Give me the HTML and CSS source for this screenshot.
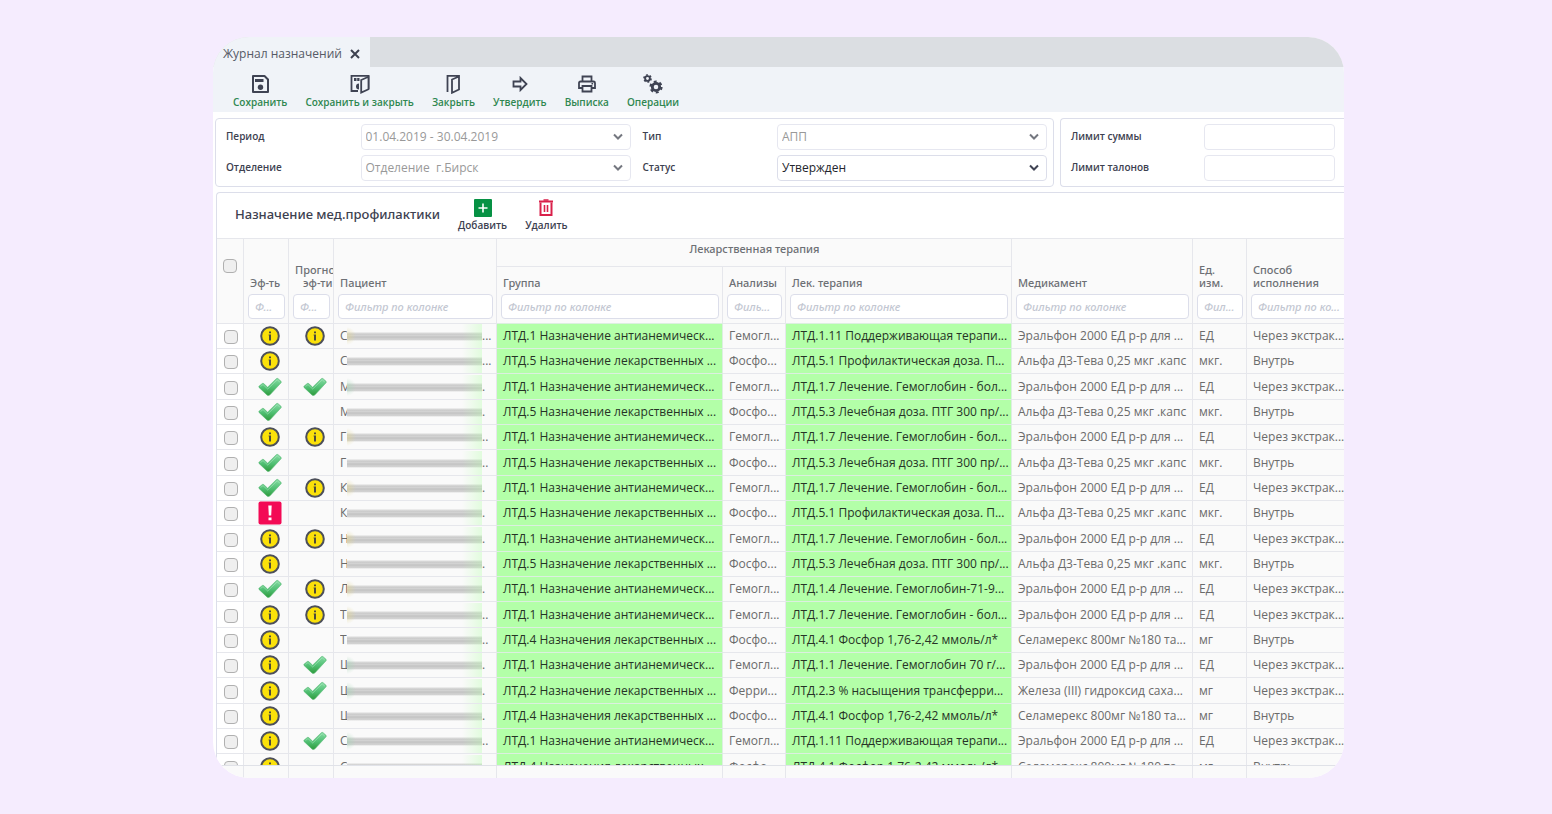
FILE: index.html
```html
<!DOCTYPE html>
<html lang="ru">
<head>
<meta charset="utf-8">
<title>Журнал назначений</title>
<link rel="stylesheet" href="styles.css">
</head>
<body>
<svg class="sprite" aria-hidden="true">
  <defs>
    <linearGradient id="tick-fill" x1="0" y1="0" x2="0" y2="1">
      <stop offset="0" stop-color="#86dba4"/>
      <stop offset="0.55" stop-color="#4fbf72"/>
      <stop offset="1" stop-color="#2f9a3c"/>
    </linearGradient>
    <symbol id="info" viewBox="0 0 20 20">
      <circle cx="10" cy="10" r="8.8" fill="#fbe10a" stroke="#4c4f5a" stroke-width="2"/>
      <path d="M9 5.400h2v1.900H9zM9 8.400h2v6.200H9z" fill="#4c4a3c"/>
      <path d="M8.300 8.400h.7v1h-.7z" fill="#4c4a3c" opacity=".5"/>
    </symbol>
    <symbol id="tick" viewBox="0 0 24 20">
      <path d="M1 9.200L4.300 6.500Q5 6 5.700 6.600L9.600 10.200L18.300 1.700Q19.200 1 20.100 1.700L23 4.300Q23.700 5 23 5.800L12 17.800Q10.400 19.200 8.900 17.900L1 10.400Q.5 9.800 1 9.200Z" fill="url(#tick-fill)" stroke="#55b873" stroke-width=".6"/>
      <path d="M2.500 9.500L5 7.600L9.700 12L19.200 2.900L21.800 5" fill="none" stroke="#b5ecc6" stroke-width="1" opacity=".5"/>
    </symbol>
    <symbol id="alert" viewBox="0 0 24 24">
      <rect x=".5" y=".5" width="23" height="23" rx="2" fill="#f30a55"/>
      <path d="M10.300 4.500h3.400l-.5 10h-2.400zM10.500 16.500h3v2.800h-3z" fill="#fff"/>
    </symbol>
    <symbol id="chevron" viewBox="0 0 10 8">
      <path d="M1 1.500L5 5.500L9 1.500" fill="none" stroke="currentColor" stroke-width="2"/>
    </symbol>
  </defs>
</svg>

<main class="window">
  <div class="tabs">
    <div class="tab">
      <span>Журнал назначений</span>
      <button class="tab-close" type="button" aria-label="Закрыть вкладку">
        <svg width="10" height="10" viewBox="0 0 10 10"><path d="M1 1L9 9M9 1L1 9" fill="none" stroke="#3d4150" stroke-width="2"/></svg>
      </button>
    </div>
  </div>

  <div class="toolbar">
    <button class="tool" type="button">
      <svg width="20" height="20" viewBox="0 0 20 20"><path d="M3 2h11.500L18 5.500V18H3z" fill="none" stroke="currentColor" stroke-width="2" stroke-linejoin="round"/><path d="M5 5h8.500v3H5z" fill="currentColor"/><circle cx="10.500" cy="13.200" r="2.700" fill="currentColor"/></svg>
      <span>Сохранить</span>
    </button>
    <button class="tool" type="button">
      <svg width="20" height="20" viewBox="0 0 20 20"><path d="M12 1.800H1.500V17H8M9 1.800H18.500V15" fill="none" stroke="currentColor" stroke-width="1.800"/><path d="M4 4h2.500v3H4zM7.200 4h2.300v3H7.200zM9 9.500v6a3 3 0 0 1 0-6z" fill="currentColor"/><path d="M11.200 6L18.500 2.800V15.200L11.200 18.500z" fill="#f0f3f8" stroke="currentColor" stroke-width="1.800"/></svg>
      <span>Сохранить и закрыть</span>
    </button>
    <button class="tool" type="button">
      <svg width="20" height="20" viewBox="0 0 20 20"><path d="M4.500 18V1.800H16V15.500L9 18.800V5.500L16 2.500" fill="none" stroke="currentColor" stroke-width="1.800"/></svg>
      <span>Закрыть</span>
    </button>
    <button class="tool" type="button">
      <svg width="20" height="20" viewBox="0 0 20 20"><path d="M3.500 7.500H10.500V4L16.500 10L10.500 16V12.500H3.500z" fill="none" stroke="currentColor" stroke-width="1.800"/></svg>
      <span>Утвердить</span>
    </button>
    <button class="tool" type="button">
      <svg width="20" height="20" viewBox="0 0 20 20"><path d="M5.500 7V2.500H14.500V7M5.500 14H2V9Q2 7.500 3.500 7.500H16.500Q18 7.500 18 9V14H14.500M5.500 12H14.500V17.500H5.500z" fill="none" stroke="currentColor" stroke-width="1.800"/><path d="M14.500 9h1.600v1.500h-1.600z" fill="currentColor"/></svg>
      <span>Выписка</span>
    </button>
    <button class="tool" type="button">
      <svg width="20" height="20" viewBox="0 0 20 20" fill="none" stroke="currentColor"><circle cx="4.500" cy="4.500" r="2.400" stroke-width="1.900"/><circle cx="4.500" cy="4.500" r="3.500" stroke-width="1.700" stroke-dasharray="1.830 1.830"/><circle cx="13" cy="13" r="3.700" stroke-width="2.800"/><circle cx="13" cy="13" r="5.500" stroke-width="2.200" stroke-dasharray="2.880 2.880"/></svg>
      <span>Операции</span>
    </button>
  </div>

  <form class="filters">
    <div class="panel panel-main">
      <div class="field">
        <label for="period">Период</label>
        <div class="select"><select id="period" disabled><option>01.04.2019 - 30.04.2019</option></select><svg><use href="#chevron"/></svg></div>
      </div>
      <div class="field">
        <label for="kind">Тип</label>
        <div class="select"><select id="kind" disabled><option>АПП</option></select><svg><use href="#chevron"/></svg></div>
      </div>
      <div class="field">
        <label for="unit">Отделение</label>
        <div class="select"><select id="unit" disabled><option>Отделение &nbsp;г.Бирск</option></select><svg><use href="#chevron"/></svg></div>
      </div>
      <div class="field">
        <label for="status">Статус</label>
        <div class="select"><select id="status"><option>Утвержден</option></select><svg><use href="#chevron"/></svg></div>
      </div>
    </div>
    <div class="panel panel-limits">
      <div class="field"><label for="sum">Лимит суммы</label><input id="sum" type="text"></div>
      <div class="field"><label for="tickets">Лимит талонов</label><input id="tickets" type="text"></div>
    </div>
  </form>

  <section class="journal">
    <div class="journal-head">
      <h1>Назначение мед.профилактики</h1>
      <button class="action" type="button">
        <svg width="20" height="20" viewBox="0 0 20 20"><rect x="1" y="1" width="18" height="18" rx="1" fill="#069144"/><path d="M10 5.500v9M5.500 10h9" stroke="#fff" stroke-width="1.600"/></svg>
        <span>Добавить</span>
      </button>
      <button class="action" type="button">
        <svg width="20" height="20" viewBox="0 0 20 20" fill="none" stroke="#d9204a"><path d="M3 3.500H17" stroke-width="2"/><path d="M7.500 2H12.500" stroke-width="1.600"/><path d="M4.500 4.500V17H15.500V4.500" stroke-width="2"/><path d="M8.500 7V14M11.500 7V14" stroke-width="1.600"/></svg>
        <span>Удалить</span>
      </button>
    </div>

    <div class="viewport">
      <table class="grid">
        <colgroup><col class="c-check"><col class="c-mark"><col class="c-mark"><col class="c-patient"><col><col class="c-tests"><col><col class="c-drug"><col class="c-unit"><col class="c-way"></colgroup>
        <thead>
          <tr class="head-top">
            <th rowspan="2" class="check-head"><input type="checkbox" aria-label="Выбрать все"></th>
            <th rowspan="2"><span>Эф-ть</span><input type="text" placeholder="Ф..." aria-label="Фильтр: Эф-ть"></th>
            <th rowspan="2"><span class="wide">Прогноз<br>эф-ти</span><input type="text" placeholder="Ф..." aria-label="Фильтр: Прогноз эф-ти"></th>
            <th rowspan="2"><span>Пациент</span><input type="text" placeholder="Фильтр по колонке" aria-label="Фильтр: Пациент"></th>
            <th colspan="3" class="band">Лекарственная терапия</th>
            <th rowspan="2"><span>Медикамент</span><input type="text" placeholder="Фильтр по колонке" aria-label="Фильтр: Медикамент"></th>
            <th rowspan="2"><span>Ед.<br>изм.</span><input type="text" placeholder="Фил..." aria-label="Фильтр: Ед. изм."></th>
            <th rowspan="2"><span>Способ<br>исполнения</span><input type="text" placeholder="Фильтр по ко..." aria-label="Фильтр: Способ исполнения"></th>
          </tr>
          <tr class="head-bottom">
            <th><span>Группа</span><input type="text" placeholder="Фильтр по колонке" aria-label="Фильтр: Группа"></th>
            <th><span>Анализы</span><input type="text" placeholder="Филь..." aria-label="Фильтр: Анализы"></th>
            <th><span>Лек. терапия</span><input type="text" placeholder="Фильтр по колонке" aria-label="Фильтр: Лек. терапия"></th>
          </tr>
        </thead>
        <tbody id="rows"></tbody>
      </table>
    </div>
    <div class="totals">
      <span class="c-check"></span><span class="c-mark"></span><span class="c-mark"></span><span class="c-patient"></span><span class="c-auto"></span><span class="c-tests"></span><span class="c-auto"></span><span class="c-drug"></span><span class="c-unit"></span><span class="c-way"></span>
    </div>
  </section>
</main>
<script src="rows.js"></script>
</body>
</html>
```
FILE: styles.css
```css
* { box-sizing: border-box; }

body {
  margin: 0;
  height: 100vh;
  padding: 37px 208px 36px 213px;
  display: flex;
  flex-direction: column;
  background: #f5ecfe;
  color: #3d4150;
  font: 12px/16px "Open Sans", "Noto Sans", sans-serif;
}

button, input, select { font: inherit; color: inherit; }
button { border: 0; padding: 0; background: none; }
.sprite { position: absolute; width: 0; height: 0; }

.window {
  flex: 1;
  min-height: 0;
  display: flex;
  flex-direction: column;
  overflow: hidden;
  border-radius: 36px;
  background: #fff;
}

.tabs { display: flex; height: 30px; background: #dbdee2; flex: none; }
.tab {
  display: flex;
  align-items: center;
  gap: 8px;
  padding: 3px 10px 0;
  background: #f0f3f8;
  color: #565a66;
}
.tab-close { display: flex; }

.toolbar {
  flex: none;
  display: flex;
  gap: 18px;
  height: 45px;
  padding: 7px 20px 0;
  background: #f0f3f8;
}
.tool, .action {
  display: flex;
  flex-direction: column;
  align-items: center;
  font-size: 10px;
  line-height: 16px;
  font-weight: 600;
}
.tool svg { color: #3f4353; }
.tool span { color: #2f8750; }

.filters {
  flex: none;
  display: flex;
  gap: 6px;
  margin: 6px 0 5px 2px;
}
.panel { border: 1px solid #dcdeea; border-radius: 4px; padding: 5px 6px 5px 10px; }
.panel-main {
  flex: 1;
  display: grid;
  grid-template-columns: 1fr 1fr;
  gap: 5px 12px;
}
.panel-limits {
  width: 284px;
  display: grid;
  gap: 5px;
  padding-right: 9px;
  border-right: 0;
  border-radius: 4px 0 0 4px;
}
.field { display: flex; height: 26px; }
.field label { flex: 1; line-height: 24px; font-size: 10px; font-weight: 600; }
.select { position: relative; width: 270px; }
.select select, .field input {
  width: 100%;
  height: 26px;
  padding: 0 4px;
  border: 1px solid #dcdeea;
  border-radius: 4px;
  background: #fff;
  color: #23242c;
  appearance: none;
  outline: 0;
}
.field input { width: 131px; border-color: #e6e7f0; }
.select select:disabled { color: #999; border-color: #e6e7f0; opacity: 1; }
.select svg {
  position: absolute;
  right: 8px;
  top: 9px;
  width: 10px;
  height: 8px;
  color: #3f4353;
  pointer-events: none;
}
.select select:disabled + svg { color: #74777f; }

.journal {
  flex: 1;
  min-height: 0;
  display: flex;
  flex-direction: column;
  margin-left: 3px;
  border: 1px solid #dcdeea;
  border-width: 1px 0 0 1px;
  border-radius: 4px 0 0 0;
}
.journal-head {
  flex: none;
  display: flex;
  gap: 18px;
  height: 45px;
  padding: 5px 18px 0;
}
.journal-head h1 {
  margin: 0;
  font: 500 13px/32px "Noto Sans", sans-serif;
}
.action { line-height: 14px; }

.viewport { flex: 1; min-height: 0; overflow: hidden; }
.grid {
  width: calc(100% + 10px);
  table-layout: fixed;
  border-collapse: separate;
  border-spacing: 0;
}
.c-check { width: 27px; }
.c-mark { width: 45px; }
.c-patient { width: 163px; }
.c-tests { width: 63px; }
.c-drug { width: 181px; }
.c-unit { width: 54px; }
.c-way { width: 107px; }
.c-auto { flex: 1; }

.grid th, .grid td {
  border: 0 solid #e6e7ec;
  border-width: 1px 1px 0 0;
  background: #fafafa;
  overflow: hidden;
  white-space: nowrap;
}
.grid th {
  padding: 0 3px 4px 4px;
  vertical-align: bottom;
  text-align: left;
  font: 500 11px/13px "Noto Sans", sans-serif;
  color: #6d7075;
}
.grid th span { display: block; padding-left: 2px; }
.grid th .wide { display: inline-block; text-align: center; }
.grid .band { text-align: center; vertical-align: top; padding-top: 3px; }
.grid .check-head { vertical-align: top; padding: 20px 0 0; }
.head-top { height: 28px; }
.head-bottom { height: 57px; }
.grid th input[type="text"] {
  display: block;
  width: 100%;
  height: 25px;
  margin-top: 5px;
  padding: 0 6px;
  border: 1px solid #dcdeea;
  border-radius: 4px;
  background: #fff;
  font-style: italic;
  outline: 0;
}
.grid th input::placeholder { color: #c3c7d2; opacity: 1; }

input[type="checkbox"] {
  appearance: none;
  display: block;
  width: 14px;
  height: 14px;
  margin: 0 auto;
  border: 1px solid #b0b0b0;
  border-radius: 4px;
  background: #efefef;
}

.grid tbody tr { height: 25px; }
.grid tbody tr:nth-child(3n) { height: 26px; }
.grid td { padding: 0 0 0 6px; color: #6b6b6b; }
.grid td:first-child { background: #fff; padding: 2px 0 0 1px; }
.grid td.mark { padding: 0 0 0 8px; }
.grid td.mark svg { display: block; margin: 0 auto; width: 24px; height: 20px; }
.grid td.mark .alert { height: 24px; }
.grid td.therapy { background: #b3ffa8; color: #263326; border-color: #dcefe0; }

.patient { display: flex; align-items: center; }
.initial { width: 7px; overflow: hidden; }
.smudge {
  --tint: transparent;
  width: 135px;
  height: 24px;
  background:
    radial-gradient(circle at 0 12px, var(--tint), transparent 9px),
    linear-gradient(90deg, transparent 115px, rgba(179, 255, 168, .35) 135px),
    linear-gradient(transparent 8px, #dadada 9px, #c8c8c8 11px, #dcdcdc 12px, #b4b4b4 13px, #d8d8d8 14px, #c4c4c4 15px, transparent 17px);
}
.smudge.info { --tint: rgba(226, 214, 150, .6); }
.smudge.tick { --tint: rgba(170, 215, 185, .6); }

.totals {
  flex: none;
  display: flex;
  width: calc(100% + 10px);
  height: 13px;
  border-top: 1px solid #e0e2e8;
  background: #fafafa;
}
.totals span { border-right: 1px solid #e6e7ec; }
```
FILE: rows.js
```js
const groups = {
  1: "ЛТД.1 Назначение антианемическ...",
  2: "ЛТД.2 Назначение лекарственных ...",
  4: "ЛТД.4 Назначения лекарственных ...",
  5: "ЛТД.5 Назначение лекарственных ..."
};
const tests = { h: "Гемогл...", p: "Фосфо...", f: "Ферри..." };
const drugs = {
  e: ["Эральфон 2000 ЕД р-р для ...", "ЕД", "Через экстрак..."],
  a: ["Альфа Д3-Тева 0,25 мкг .капс", "мкг.", "Внутрь"],
  s: ["Селамерекс 800мг №180 та...", "мг", "Внутрь"],
  z: ["Железа (III) гидроксид саха...", "мг", "Через экстрак..."]
};
const support = "ЛТД.1.11 Поддерживающая терапи...";
const dose = "ЛТД.5.1 Профилактическая доза. П...";
const cure = "ЛТД.1.7 Лечение. Гемоглобин - бол...";
const heal = "ЛТД.5.3 Лечебная доза. ПТГ 300 пр/...";
const phosphor = "ЛТД.4.1 Фосфор 1,76-2,42 ммоль/л*";

// effect, forecast, initial, tail, group, test, therapy, drug
const rows = [
  ["info", "info", "С", "...", 1, "h", support, "e"],
  ["info", "", "С", "...", 5, "p", dose, "a"],
  ["tick", "tick", "М", ".", 1, "h", cure, "e"],
  ["tick", "", "М", ".", 5, "p", heal, "a"],
  ["info", "info", "Г", "..", 1, "h", cure, "e"],
  ["tick", "", "Г", "..", 5, "p", heal, "a"],
  ["tick", "info", "К", ".", 1, "h", cure, "e"],
  ["alert", "", "К", ".", 5, "p", dose, "a"],
  ["info", "info", "Н", ".", 1, "h", cure, "e"],
  ["info", "", "Н", ".", 5, "p", heal, "a"],
  ["tick", "info", "Л", ".", 1, "h", "ЛТД.1.4 Лечение. Гемоглобин-71-9...", "e"],
  ["info", "info", "Т", "..", 1, "h", cure, "e"],
  ["info", "", "Т", "..", 4, "p", phosphor, "s"],
  ["info", "tick", "Ш", ".", 1, "h", "ЛТД.1.1 Лечение. Гемоглобин 70 г/...", "e"],
  ["info", "tick", "Ш", ".", 2, "f", "ЛТД.2.3 % насыщения трансферри...", "z"],
  ["info", "", "Ш", ".", 4, "p", phosphor, "s"],
  ["info", "tick", "С", "..", 1, "h", support, "e"],
  ["info", "", "С", "", 4, "p", phosphor, "s"]
];

const icon = name => name ? `<svg class="${name}"><use href="#${name}"/></svg>` : "";

document.getElementById("rows").innerHTML = rows.map((r, i) => {
  const [effect, forecast, initial, tail, group, test, therapy, drug] = r;
  const [title, unit, way] = drugs[drug];
  return `<tr>
    <td><input type="checkbox" aria-label="Строка ${i + 1}"></td>
    <td class="mark">${icon(effect)}</td>
    <td class="mark">${icon(forecast)}</td>
    <td><div class="patient"><span class="initial">${initial}</span><span class="smudge ${forecast}"></span><span>${tail}</span></div></td>
    <td class="therapy">${groups[group]}</td>
    <td>${tests[test]}</td>
    <td class="therapy">${therapy}</td>
    <td>${title}</td><td>${unit}</td><td>${way}</td>
  </tr>`;
}).join("");
```
